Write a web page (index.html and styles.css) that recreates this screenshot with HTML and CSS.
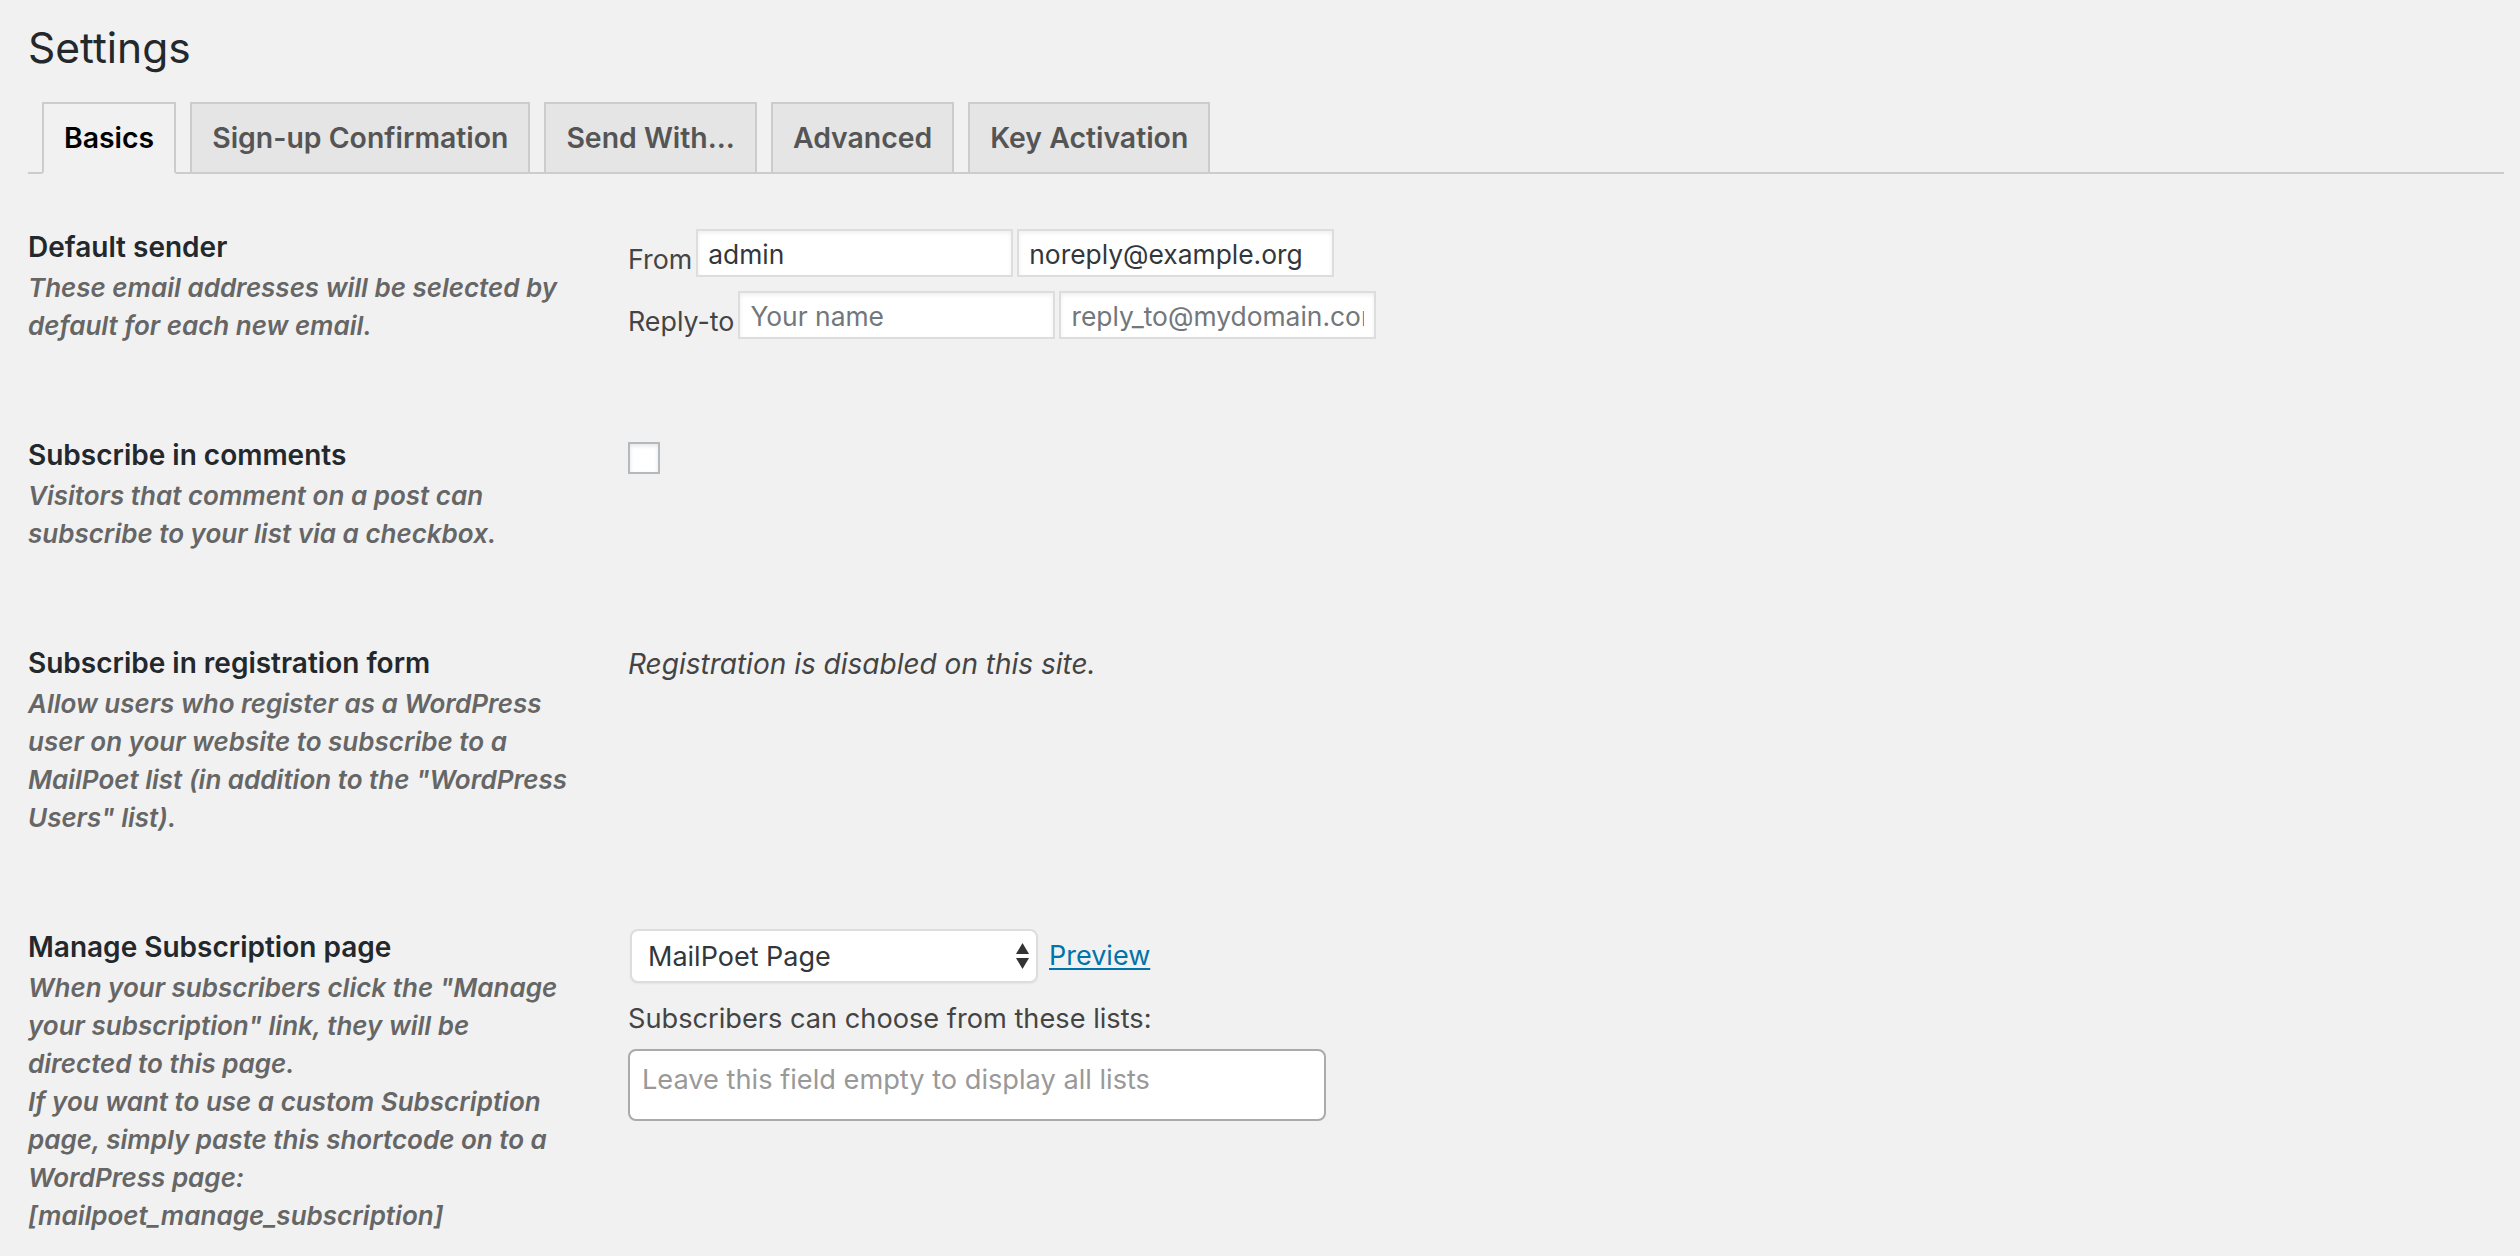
FILE: index.html
```html
<!DOCTYPE html>
<html lang="en">
<head>
<meta charset="utf-8">
<title>Settings</title>
<link rel="stylesheet" href="styles.css">
</head>
<body>
<div class="wrap">
  <h1 class="page-title">Settings</h1>

  <nav class="nav-tabs">
    <a class="nav-tab nav-tab-active" href="#basics">Basics</a>
    <a class="nav-tab" href="#signup">Sign-up Confirmation</a>
    <a class="nav-tab" href="#mta">Send With...</a>
    <a class="nav-tab" href="#advanced">Advanced</a>
    <a class="nav-tab" href="#premium">Key Activation</a>
  </nav>

  <div class="settings">
    <div class="row">
      <div class="row-label">
        <div class="row-title">Default sender</div>
        <p class="row-desc">These email addresses will be selected by default for each new email.</p>
      </div>
      <div class="row-field field-sender">
        <div class="sender">
          <div class="sender-line">
            <label class="sender-label">From</label>
            <input class="text-input" type="text" value="admin">
            <input class="text-input" type="text" value="noreply@example.org">
          </div>
          <div class="sender-line">
            <label class="sender-label">Reply-to</label>
            <input class="text-input" type="text" placeholder="Your name">
            <input class="text-input" type="text" placeholder="reply_to@mydomain.com">
          </div>
        </div>
      </div>
    </div>

    <div class="row">
      <div class="row-label">
        <div class="row-title">Subscribe in comments</div>
        <p class="row-desc">Visitors that comment on a post can subscribe to your list via a checkbox.</p>
      </div>
      <div class="row-field field-comments">
        <input class="checkbox" type="checkbox">
      </div>
    </div>

    <div class="row">
      <div class="row-label">
        <div class="row-title">Subscribe in registration form</div>
        <p class="row-desc">Allow users who register as a WordPress user on your website to subscribe to a MailPoet list (in addition to the "WordPress Users" list).</p>
      </div>
      <div class="row-field field-registration">
        <p class="note">Registration is disabled on this site.</p>
      </div>
    </div>

    <div class="row">
      <div class="row-label">
        <div class="row-title">Manage Subscription page</div>
        <p class="row-desc">When your subscribers click the "Manage your subscription" link, they will be directed to this page.<br>If you want to use a custom Subscription page, simply paste this shortcode on to a WordPress page: [mailpoet_manage_subscription]</p>
      </div>
      <div class="row-field field-manage">
        <div class="page-select-line">
          <span class="select-wrap">
            <select class="page-select">
              <option>MailPoet Page</option>
            </select>
            <svg class="select-arrows" viewBox="0 0 13 26" aria-hidden="true">
              <polygon points="6.5,0 13,11 0,11" fill="#333"/>
              <polygon points="0,15 13,15 6.5,26" fill="#333"/>
            </svg>
          </span>
          <a class="preview-link" href="#preview">Preview</a>
        </div>
        <p class="lists-label">Subscribers can choose from these lists:</p>
        <div class="lists-box">
          <input class="lists-search" type="text" placeholder="Leave this field empty to display all lists">
        </div>
      </div>
    </div>
  </div>
</div>
</body>
</html>
```
FILE: styles.css
```css
html, body {
  margin: 0;
  background: #f1f1f1;
}

body {
  font-family: Inter, "Noto Sans", sans-serif;
  color: #444;
}

.wrap {
  padding: 0 16px 0 28px;
}

.page-title {
  margin: 0;
  padding: 18px 0 8px;
  font-size: 42.5px;
  line-height: 60px;
  font-weight: 400;
  color: #23282d;
}

/* Tabs */
.nav-tabs {
  display: flex;
  align-items: flex-end;
  padding-top: 16px;
  border-bottom: 2px solid #ccc;
}

.nav-tab {
  margin-left: 14px;
  padding: 10px 20px;
  border: 2px solid #ccc;
  border-bottom: none;
  background: #e5e5e5;
  color: #555;
  font-size: 28.4px;
  font-weight: 600;
  line-height: 48px;
  text-decoration: none;
  white-space: nowrap;
}

.nav-tab-active {
  background: #f1f1f1;
  color: #000;
  border-bottom: 2px solid #f1f1f1;
  margin-bottom: -2px;
}

/* Settings rows */
.settings {
  margin-top: 16px;
}

.row {
  display: flex;
}

.row-label {
  flex: none;
  width: 600px;
  box-sizing: border-box;
  padding: 40px 57px 53px 0;
}

.row-title {
  font-size: 28px;
  font-weight: 600;
  line-height: 34px;
  color: #23282d;
}

.row-desc {
  margin: 5px 0 0;
  font-size: 26px;
  font-weight: 600;
  font-style: italic;
  line-height: 38px;
  color: #666;
}

.row-field {
  flex: 1;
  min-width: 0;
}

.field-sender { padding-top: 39px; }
.field-comments { padding-top: 44px; }
.field-registration { padding-top: 40px; }
.field-manage { padding-top: 39px; }

/* Default sender */
.sender {
  display: flex;
  flex-direction: column;
  gap: 14px;
}

.sender-line {
  display: flex;
  align-items: flex-end;
}

.sender-label {
  font-size: 26.8px;
  line-height: 36px;
  color: #444;
  margin-right: 2px;
}

.text-input {
  width: 317px;
  height: 48px;
  box-sizing: border-box;
  margin: 0 2px;
  padding: 2px 10px 0;
  border: 2px solid #ddd;
  border-radius: 0;
  box-shadow: inset 0 2px 4px rgba(0, 0, 0, 0.07);
  background: #fff;
  color: #32373c;
  font-family: Inter, "Noto Sans", sans-serif;
  font-size: 26.4px;
  outline: none;
}

.text-input::placeholder {
  color: #72777c;
}

/* Checkbox */
.checkbox {
  appearance: none;
  -webkit-appearance: none;
  display: block;
  width: 32px;
  height: 32px;
  margin: 0;
  border: 2px solid #b4b9be;
  background: #fff;
  box-shadow: inset 0 2px 4px rgba(0, 0, 0, 0.1);
}

/* Registration */
.note {
  margin: 0;
  font-size: 28px;
  font-style: italic;
  line-height: 36px;
  color: #444;
}

/* Manage subscription */
.page-select-line {
  display: flex;
  align-items: center;
}

.select-wrap {
  position: relative;
  display: block;
  margin-left: 2px;
}

.page-select {
  appearance: none;
  -webkit-appearance: none;
  display: block;
  width: 408px;
  height: 54px;
  box-sizing: border-box;
  margin: 0;
  padding: 0 40px 0 16px;
  border: 2px solid #ddd;
  border-radius: 8px;
  background: #fff;
  box-shadow: 0 1px 2px rgba(0, 0, 0, 0.05);
  color: #32373c;
  font-family: Inter, "Noto Sans", sans-serif;
  font-size: 27px;
  outline: none;
}

.select-arrows {
  position: absolute;
  right: 9px;
  top: 14px;
  width: 13px;
  height: 26px;
  pointer-events: none;
}

.preview-link {
  margin-left: 11px;
  font-size: 27px;
  line-height: 36px;
  color: #0073aa;
  text-decoration: underline;
  text-decoration-thickness: 2px;
  text-underline-offset: 3px;
}

.lists-label {
  margin: 18px 0 0;
  font-size: 27.2px;
  line-height: 36px;
  color: #444;
}

.lists-box {
  width: 698px;
  height: 72px;
  box-sizing: border-box;
  margin-top: 12px;
  padding: 11px 12px 0;
  border: 2px solid #aaa;
  border-radius: 8px;
  background: #fff;
}

.lists-search {
  display: block;
  width: 100%;
  height: 36px;
  margin: 0;
  padding: 0;
  border: 0;
  outline: none;
  background: transparent;
  color: #32373c;
  font-family: Inter, "Noto Sans", sans-serif;
  font-size: 27.2px;
  line-height: 36px;
}

.lists-search::placeholder {
  color: #999;
}
```
